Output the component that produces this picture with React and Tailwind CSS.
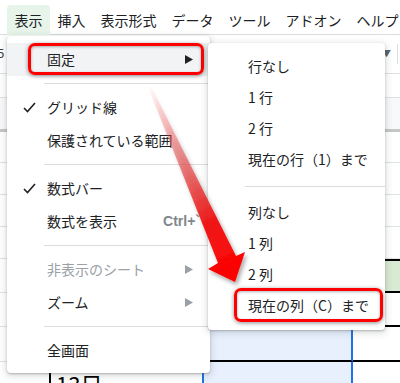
// App.jsx - Google Sheets "表示 > 固定" menu screenshot
const jp = "font-['Noto_Sans_CJK_JP','Noto_Sans',sans-serif]";

function Tri({ color = "#202124" }) {
  return (
    <svg width="8" height="9" viewBox="0 0 8 9" className="ml-auto shrink-0">
      <polygon points="0,0 8,4.5 0,9" fill={color} />
    </svg>
  );
}

function Check() {
  return (
    <svg width="13" height="11" viewBox="0 0 13 11" className="absolute left-[16px] top-[11px]">
      <path d="M1 6 L4.5 9.5 L12 1" fill="none" stroke="#202124" strokeWidth="1.6" />
    </svg>
  );
}

function MainItem({ children, check, arrow, disabled, shortcut, active }) {
  return (
    <div
      className={
        "relative flex items-center h-[33px] pl-[40px] pr-[17px] text-[14px] " +
        (active ? "bg-[#f1f3f4] " : "") +
        (disabled ? "text-[#9aa0a6]" : "text-[#202124]")
      }
    >
      {check && <Check />}
      <span>{children}</span>
      {shortcut && (
        <span className="ml-auto mr-[-7px] font-['Liberation_Sans',Arial,sans-serif] font-bold text-[14px] text-[#80868b]">
          {shortcut}
        </span>
      )}
      {arrow && <Tri color={arrow} />}
    </div>
  );
}

function Sep({ h = "h-[15px]" }) {
  return (
    <div className={"flex items-center pl-[37px] " + h}>
      <div className="h-px w-full bg-[#dadce0]" />
    </div>
  );
}

function SubItem({ children }) {
  return <div className="flex items-center h-[31px] pl-[40px] text-[14px] text-[#202124]">{children}</div>;
}

const menus = ["表示", "挿入", "表示形式", "データ", "ツール", "アドオン", "ヘルプ"];

export default function App() {
  return (
    <div className={"relative w-[400px] h-[383px] overflow-hidden bg-white " + jp}>
      {/* menu bar */}
      <div className="flex items-start h-[35px] pl-[7px] pt-[5px] border-b border-[#dadce0] whitespace-nowrap">
        {menus.map((m, i) => (
          <div
            key={m}
            className={
              "h-[30px] px-[7.5px] shrink-0 flex items-center text-[14px] text-[#202124] rounded-t-[4px] " +
              (i === 0 ? "bg-[#e6f4ea]" : "")
            }
          >
            {m}
          </div>
        ))}
      </div>

      {/* toolbar */}
      <div className="flex items-center h-[39px] border-b border-[#e0e0e0]">
        <span className="ml-[-3px] text-[13px] text-[#3c4043] font-['Liberation_Sans',Arial,sans-serif]">5</span>
        <span className="ml-auto mr-[6px] text-[9px] text-[#5f6368]">▼</span>
        <div className="w-px h-[20px] bg-[#dadce0] mr-[2px]" />
      </div>
      <div className="h-[24px] border-b border-[#e0e0e0]" />
      {/* column header */}
      <div className="h-[34px] bg-[#f8f9fa] border-b-[3px] border-[#c4c7c5]" />

      {/* sheet rows */}
      {[31, 32, 32, 32].map((h, i) => (
        <div key={i} className="flex border-b border-[#e2e3e3]" style={{ height: h }} />
      ))}
      <div className="flex h-[34px]">
        <div className="w-[49px] border-b border-[#e2e3e3]" />
        <div className="w-[304px] border-y-2 border-black" />
        <div className="flex-1 bg-[#d9ead3] border-y-2 border-black" />
      </div>
      <div className="flex h-[34px]">
        <div className="w-[49px] border-b border-[#e2e3e3]" />
        <div className="flex-1 border-b-2 border-black" />
      </div>
      <div className="flex h-[35px]">
        <div className="w-[49px] border-b border-[#e2e3e3]" />
        <div className="w-[153px] border-l-2 border-b-2 border-black" />
        <div className="w-[151px] bg-[#e8f0fe] border-x-2 border-[#1a73e8] border-b-2 border-b-black" />
        <div className="flex-1 border-b-2 border-black" />
      </div>
      <div className="flex h-[30px]">
        <div className="w-[49px]" />
        <div className="w-[153px] border-l-2 border-black pl-[5px] text-[22px] leading-[30px] pt-[6px] text-black">13日</div>
        <div className="w-[151px] bg-[#e8f0fe] border-x-2 border-[#1a73e8]" />
      </div>

      {/* 表示 menu */}
      <div className="absolute left-[7px] top-[36px] w-[203px] bg-white rounded-[4px] pt-[7px] pb-[6px] shadow-[0_2px_6px_2px_rgba(60,64,67,0.15),0_1px_2px_rgba(60,64,67,0.3)]">
        <MainItem active arrow="#202124">固定</MainItem>
        <Sep />
        <MainItem check>グリッド線</MainItem>
        <MainItem>保護されている範囲</MainItem>
        <Sep />
        <MainItem check>数式バー</MainItem>
        <MainItem shortcut="Ctrl+`">数式を表示</MainItem>
        <Sep />
        <MainItem disabled arrow="#9aa0a6">非表示のシート</MainItem>
        <MainItem arrow="#9aa0a6">ズーム</MainItem>
        <Sep />
        <MainItem>全画面</MainItem>
        <div className="absolute left-[21px] top-[7px] w-[176px] h-[32px] rounded-[7px] border-[3px] border-[#ff0000] shadow-[0_1px_4px_rgba(0,0,0,0.45),inset_0_1px_3px_rgba(0,0,0,0.3)]" />
      </div>

      {/* 固定 submenu */}
      <div className="absolute left-[208px] top-[43px] w-[177px] bg-white rounded-[4px] pt-[8px] pb-[9px] whitespace-nowrap shadow-[0_2px_6px_2px_rgba(60,64,67,0.15),0_1px_2px_rgba(60,64,67,0.3)]">
        <SubItem>行なし</SubItem>
        <SubItem>1 行</SubItem>
        <SubItem>2 行</SubItem>
        <SubItem>現在の行（1）まで</SubItem>
        <Sep h="h-[22px]" />
        <SubItem>列なし</SubItem>
        <SubItem>1 列</SubItem>
        <SubItem>2 列</SubItem>
        <SubItem>現在の列（C）まで</SubItem>
        <div className="absolute left-[26px] top-[245px] w-[149px] h-[34px] rounded-[7px] border-[3px] border-[#ff0000] shadow-[0_1px_4px_rgba(0,0,0,0.45),inset_0_1px_3px_rgba(0,0,0,0.3)]" />
      </div>

      {/* red annotation arrow */}
      <svg className="absolute left-0 top-0 pointer-events-none" width="400" height="383" viewBox="0 0 400 383">
        <defs>
          <linearGradient id="arrowFill" gradientUnits="userSpaceOnUse" x1="148" y1="87" x2="235" y2="281">
            <stop offset="0" stopColor="#ff3030" stopOpacity="0" />
            <stop offset="0.35" stopColor="#e04848" stopOpacity="0.55" />
            <stop offset="0.7" stopColor="#f01010" stopOpacity="0.95" />
            <stop offset="1" stopColor="#ff0000" stopOpacity="1" />
          </linearGradient>
          <filter id="arrowShadow" x="-20%" y="-10%" width="140%" height="130%">
            <feDropShadow dx="2" dy="3" stdDeviation="2" floodColor="#000" floodOpacity="0.35" />
          </filter>
        </defs>
        <polygon
          points="148,87 151,86 236,256 245,252 235,282 208,269 218,263"
          fill="url(#arrowFill)"
          filter="url(#arrowShadow)"
        />
      </svg>
    </div>
  );
}
